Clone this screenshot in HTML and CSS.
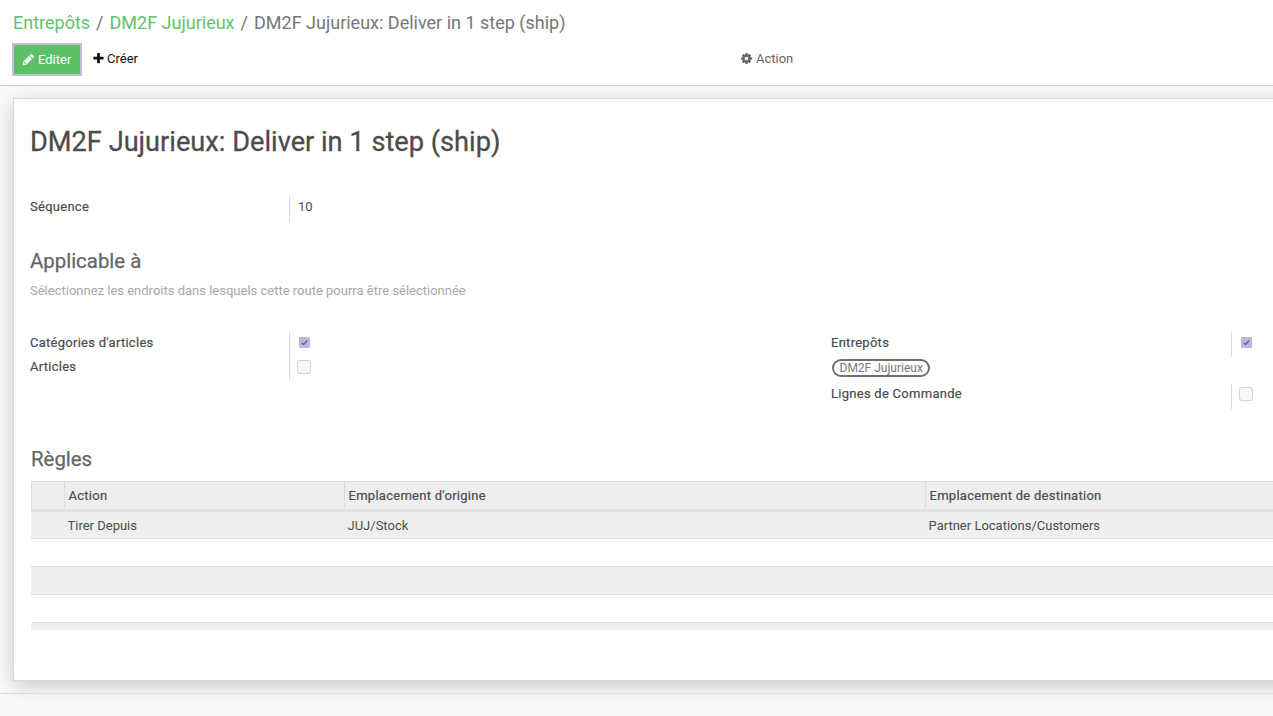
FILE: index.html
```html
<!DOCTYPE html>
<html lang="fr">
<head>
    <meta charset="UTF-8">
    <title>DM2F Jujurieux: Deliver in 1 step (ship)</title>
    <link rel="stylesheet" href="styles.css">
</head>
<body>
    <div class="control-panel">
        <ol class="breadcrumb">
            <li><a href="#">Entrepôts</a></li>
            <li class="sep">/</li>
            <li><a href="#">DM2F Jujurieux</a></li>
            <li class="sep">/</li>
            <li class="current">DM2F Jujurieux: Deliver in 1 step (ship)</li>
        </ol>
        <div class="toolbar">
            <button class="btn btn-edit">
                <svg class="icon" viewBox="0 0 1792 1792"><path d="M491 1536l91-91-235-235-91 91v107h128v128h107zm523-928q0-22-22-22-10 0-17 7l-542 542q-7 7-7 17 0 22 22 22 10 0 17-7l542-542q7-7 7-17zm-54-192l416 416-832 832h-416v-416zm683 96q0 53-37 90l-166 166-416-416 166-165q36-38 90-38 53 0 91 38l235 234q37 39 37 91z"/></svg>
                Editer
            </button>
            <button class="btn btn-create">
                <svg class="icon" viewBox="0 0 1792 1792"><path d="M1600 736v192q0 40-28 68t-68 28h-416v416q0 40-28 68t-68 28h-192q-40 0-68-28t-28-68v-416h-416q-40 0-68-28t-28-68v-192q0-40 28-68t68-28h416v-416q0-40 28-68t68-28h192q40 0 68 28t28 68v416h416q40 0 68 28t28 68z"/></svg>
                Créer
            </button>
            <button class="btn btn-action">
                <svg class="icon" viewBox="0 0 1792 1792"><path d="M1152 896q0-106-75-181t-181-75-181 75-75 181 75 181 181 75 181-75 75-181zm512-109v222q0 12-8 23t-20 13l-185 28q-19 54-39 91 35 50 107 138 10 12 10 25t-9 23q-27 37-99 108t-94 71q-12 0-26-9l-138-108q-44 23-91 38-16 136-29 186-7 28-36 28h-222q-14 0-24.500-8.500t-11.500-21.500l-28-184q-49-16-90-37l-141 107q-10 9-25 9-14 0-25-11-126-114-165-168-7-10-7-23 0-12 8-23 15-21 51-66.500t54-70.500q-27-50-41-99l-183-27q-13-2-21-12.500t-8-23.500v-222q0-12 8-23t19-13l186-28q14-46 39-92-40-57-107-138-10-12-10-24 0-10 9-23 26-36 98.500-107.500t94.500-71.500q13 0 26 10l138 107q44-23 91-38 16-136 29-186 7-28 36-28h222q14 0 24.500 8.500t11.500 21.500l28 184q49 16 90 37l142-107q9-9 24-9 13 0 25 10 129 119 165 170 7 8 7 22 0 12-8 23-15 21-51 66.500t-54 70.500q26 50 41 98l183 28q13 2 21 12.500t8 23.500z"/></svg>
                Action
            </button>
        </div>
    </div>

    <div class="content">
        <div class="sheet">
            <h1 class="title">DM2F Jujurieux: Deliver in 1 step (ship)</h1>

            <div class="field field-seq">
                <div class="label">Séquence</div>
                <div class="value">10</div>
            </div>

            <h2 class="section section-apply">Applicable à</h2>
            <p class="hint">Sélectionnez les endroits dans lesquels cette route pourra être sélectionnée</p>

            <div class="groups">
                <div class="group group-left">
                    <div class="field field-check">
                        <div class="label">Catégories d'articles</div>
                        <div class="value"><span class="check checked"><svg viewBox="0 0 12 12"><path d="M3 6.300l2 1.900 4-4.400" /></svg></span></div>
                    </div>
                    <div class="field field-check">
                        <div class="label">Articles</div>
                        <div class="value"><span class="check"></span></div>
                    </div>
                </div>
                <div class="group group-right">
                    <div class="field field-check">
                        <div class="label">Entrepôts</div>
                        <div class="value"><span class="check checked"><svg viewBox="0 0 12 12"><path d="M3 6.300l2 1.900 4-4.400" /></svg></span></div>
                    </div>
                    <div class="tag-row"><span class="tag">DM2F Jujurieux</span></div>
                    <div class="field field-check field-lines">
                        <div class="label">Lignes de Commande</div>
                        <div class="value"><span class="check"></span></div>
                    </div>
                </div>
            </div>

            <h2 class="section section-rules">Règles</h2>
            <table class="rules">
                <thead>
                    <tr>
                        <th class="col-handle"></th>
                        <th class="col-action">Action</th>
                        <th class="col-from">Emplacement d'origine</th>
                        <th>Emplacement de destination</th>
                    </tr>
                </thead>
                <tbody>
                    <tr class="odd">
                        <td></td>
                        <td>Tirer Depuis</td>
                        <td>JUJ/Stock</td>
                        <td>Partner Locations/Customers</td>
                    </tr>
                    <tr class="even"><td colspan="4"></td></tr>
                    <tr class="odd"><td colspan="4"></td></tr>
                    <tr class="even"><td colspan="4"></td></tr>
                </tbody>
            </table>
            <div class="table-foot"></div>
        </div>
    </div>

    <div class="bottom-bar"></div>
</body>
</html>
```

FILE: styles.css
```css
html, body {
    margin: 0;
    padding: 0;
    height: 100%;
    overflow: hidden;
}
body {
    background-color: #f9f9f9;
    font-family: Roboto, "Noto Sans", sans-serif;
    font-size: 13px;
    color: #4c4c4c;
}

/* top bar */
.control-panel {
    height: 85px;
    box-sizing: content-box;
    background-color: white;
    border-bottom: 1px solid #cfcfcf;
}
.breadcrumb {
    display: flex;
    gap: 6px;
    margin: 0;
    padding: 12px 0 0 13px;
    list-style: none;
    font-size: 18px;
    line-height: 21px;
    color: #777777;
}
.breadcrumb a {
    color: #5fc46b;
    text-decoration: none;
}
.toolbar {
    display: flex;
    align-items: flex-start;
    margin-top: 10px;
    padding-left: 12px;
}
.btn {
    display: flex;
    align-items: center;
    gap: 3px;
    height: 31px;
    padding: 0;
    border: none;
    background: none;
    font-family: inherit;
    font-size: 13px;
}
.icon {
    width: 13px;
    height: 13px;
    fill: currentColor;
}
.btn-edit {
    width: 70px;
    height: 33px;
    padding-left: 8px;
    box-sizing: border-box;
    background-color: #5cc068;
    border: 2px solid #c0c0d8;
    color: white;
}
.btn-create {
    gap: 2px;
    margin-left: 10px;
    color: #111111;
}
.btn-action {
    margin-left: 602px;
    color: #666666;
}

/* sheet */
.content {
    padding: 12px 0 0 13px;
}
.sheet {
    width: 1300px;
    height: 583px;
    box-sizing: border-box;
    padding-left: 16px;
    background-color: white;
    border: 1px solid #d9d9d9;
    box-shadow: 0 5px 20px -1px rgba(0, 0, 0, 0.2);
}
.title {
    margin: 0;
    padding-top: 28px;
    font-size: 27.2px;
    line-height: 31px;
    font-weight: 400;
    -webkit-text-stroke: 0.3px #4c4c4c;
    color: #4c4c4c;
}
.field {
    display: flex;
}
.label {
    letter-spacing: 0.27px;
    -webkit-text-stroke: 0.2px #4c4c4c;
    color: #4c4c4c;
}
.field-seq {
    margin-top: 38px;
    height: 26px;
}
.field-seq .label {
    width: 259px;
    line-height: 21px;
}
.value {
    border-left: 1px solid #d9d9d9;
    padding-left: 8px;
}
.field-seq .value {
    line-height: 22px;
}
.section {
    margin: 0;
    font-size: 20.4px;
    line-height: 24px;
    font-weight: 400;
    -webkit-text-stroke: 0.25px #666666;
    color: #666666;
}
.section-apply {
    margin-top: 27px;
}
.hint {
    margin: 9px 0 0;
    line-height: 18px;
    color: #a8a8a8;
}

/* checkbox groups */
.groups {
    display: flex;
    margin-top: 32px;
}
.group-left {
    width: 801px;
}
.group-left .label {
    width: 259px;
}
.group-right .label {
    width: 400px;
}
.field-check {
    height: 24px;
    line-height: 22px;
}
.group-right .field-check {
    height: 25px;
}
.field-lines .label {
    line-height: 19px;
}
.check {
    display: block;
    box-sizing: border-box;
    width: 14px;
    height: 14px;
    margin: 4px 0 0 -1px;
    border: 1px solid #d2d2d2;
    border-radius: 3px;
    background-color: #f7f7f7;
}
.field-lines .check {
    margin-top: 3px;
}
.check.checked {
    width: 11px;
    height: 11px;
    margin: 5px 0 0 1px;
    border: none;
    border-radius: 1px;
    background-color: #b9b9d9;
}
.check svg {
    display: block;
    width: 11px;
    height: 11px;
    fill: none;
    stroke: #62629a;
    stroke-width: 1.5;
}
.tag-row {
    height: 27px;
    box-sizing: border-box;
    padding-top: 2px;
    line-height: 18px;
}
.tag {
    display: inline-block;
    box-sizing: border-box;
    height: 18px;
    margin-left: 1px;
    padding: 0 5.500px;
    border: 2px solid #707070;
    border-radius: 9px;
    font-size: 12px;
    line-height: 14px;
    color: #777777;
}

/* rules table */
.section-rules {
    margin-top: 38px;
    padding-left: 1px;
}
.rules {
    width: 1255px;
    margin: 10px 0 0 1px;
    border-collapse: collapse;
    table-layout: fixed;
}
.col-handle {
    width: 33px;
}
.col-action {
    width: 280px;
}
.col-from {
    width: 581px;
}
.rules th {
    height: 29px;
    padding: 0 4px 0 3.500px;
    box-sizing: border-box;
    text-align: left;
    font-weight: 400;
    letter-spacing: 0.27px;
    -webkit-text-stroke: 0.2px #4c4c4c;
    background-color: #eeeeee;
    border: 1px solid #dcdcdc;
    border-bottom: 3px solid #dfe0e3;
}
.rules td {
    height: 28px;
    padding: 0 3px;
    box-sizing: border-box;
    border-bottom: 1px solid #e0e0e0;
}
.rules .odd td {
    background-color: #eef0f0;
}
.rules .odd td:first-child {
    border-left: 1px solid #eef0f0;
}
.table-foot {
    height: 7px;
    margin-left: 1px;
    background-color: #eeeeee;
}

.bottom-bar {
    margin-top: 12px;
    border-top: 1px solid #dcdcdc;
}
```
